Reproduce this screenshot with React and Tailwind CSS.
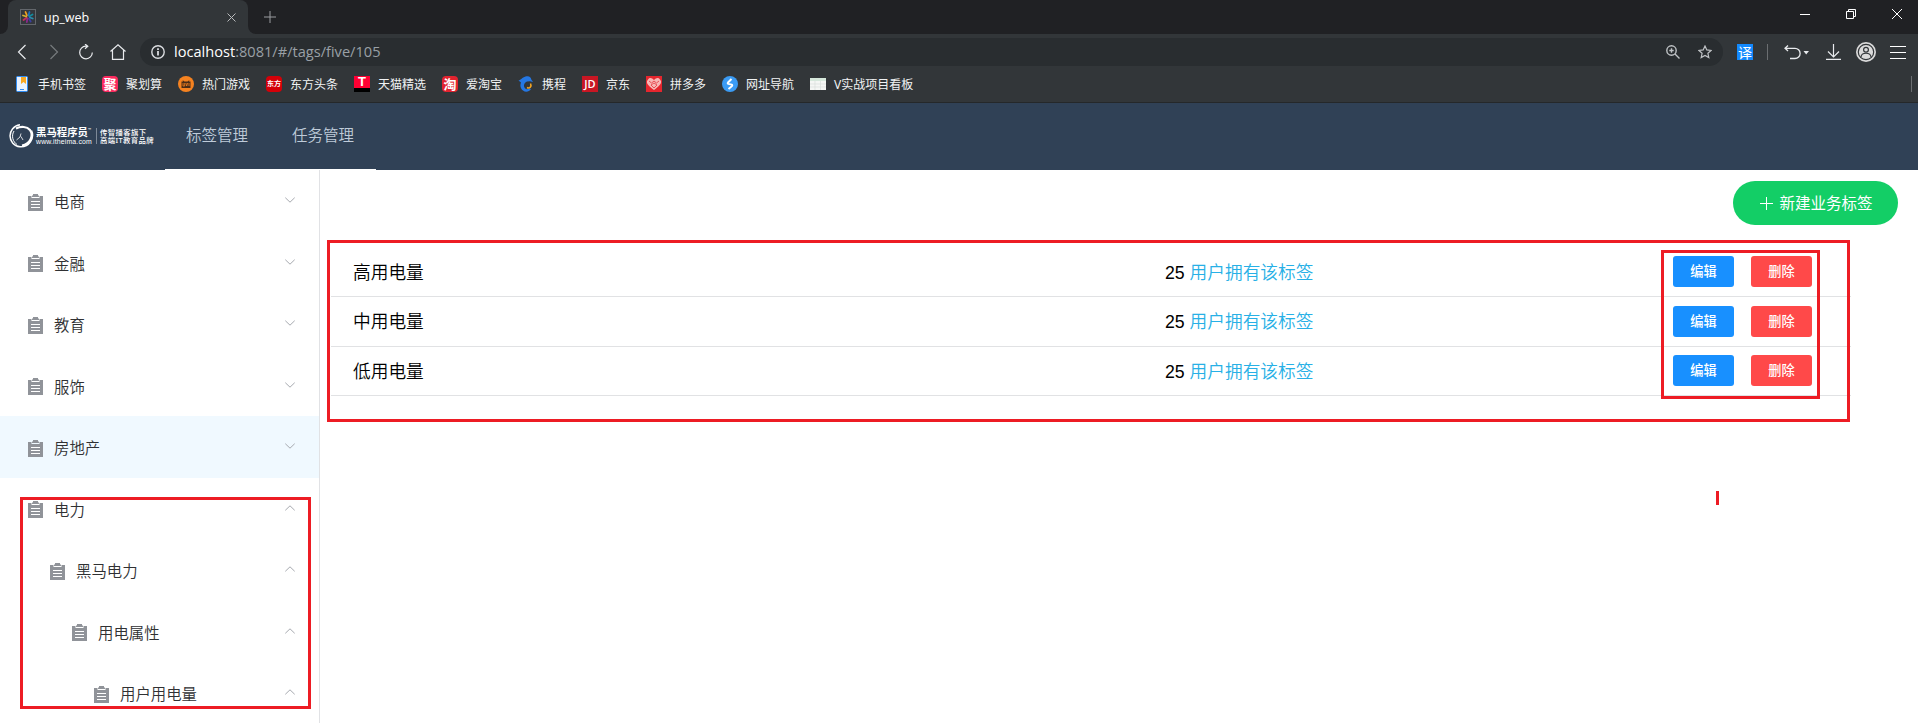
const CJK = "font-['Noto_Sans','Noto_Sans_CJK_SC',sans-serif]";

function Favicon() {
  return (
    <svg className="h-4 w-4" viewBox="0 0 16 16" fill="none">
      <rect x=".5" y=".5" width="15" height="15" fill="#34373c" stroke="#63676c" />
      <g strokeWidth="1.800" strokeLinecap="round">
        <path d="M7 6.500 5.500 3" stroke="#f0a020" />
        <path d="M8.500 6.500l1-3.500" stroke="#1d6fc0" />
        <path d="M9.500 7.300l3-1.800" stroke="#128a9c" />
        <path d="M9.800 8.500l3 1" stroke="#2a8fb0" />
        <path d="M9 9.500l1.700 3" stroke="#3a3fa0" />
        <path d="M7.500 9.500l-.7 3.500" stroke="#8a2a8c" />
        <path d="M6.500 8.800 3.500 11" stroke="#c0305c" />
        <path d="M6.200 7.500 3 6.500" stroke="#d8b030" />
      </g>
    </svg>
  );
}

function TitleBar() {
  return (
    <div className="flex h-[34px] shrink-0 bg-[#202124]">
      <div className="flex w-2 items-end bg-[#323639]">
        <div className="h-full w-2 rounded-br-lg bg-[#202124]" />
      </div>
      <div className="bg-[#202124]">
        <div className="flex h-[34px] w-60 items-center rounded-t-lg bg-[#323639] pl-3 pr-3">
          <Favicon />
          <span className="ml-2 flex-1 pt-0.5 font-['Open_Sans',sans-serif] text-[12.500px] font-medium leading-4 text-white">up_web</span>
          <svg className="h-[9px] w-[9px]" viewBox="0 0 9 9" stroke="#b9bbbd" fill="none"><path d="M.5.5l8 8M8.500.5l-8 8" /></svg>
        </div>
      </div>
      <div className="flex w-2 bg-[#323639]">
        <div className="h-full w-2 rounded-bl-lg bg-[#202124]" />
      </div>
      <svg className="ml-2 mt-[11px] h-3 w-3" viewBox="0 0 12 12" stroke="#9a9da0" fill="none"><path d="M6 0v12M0 6h12" /></svg>
      <div className="ml-auto flex items-start gap-9 pr-4 pt-[9px]">
        <svg className="h-[10px] w-[10px]" viewBox="0 0 10 10" stroke="#fff"><path d="M0 5.500h10" /></svg>
        <svg className="h-[10px] w-[10px]" viewBox="0 0 10 10" stroke="#fff" fill="none"><path d="M.5 2.500h7v7h-7zM2.500 2.500v-2h7v7h-2" /></svg>
        <svg className="h-[10px] w-[10px]" viewBox="0 0 10 10" stroke="#fff"><path d="M0 0l10 10M10 0L0 10" /></svg>
      </div>
    </div>
  );
}

function Toolbar() {
  return (
    <div className="flex h-9 shrink-0 items-center">
      <svg className="ml-[17px] h-4 w-[10px]" viewBox="0 0 10 16" stroke="#e8eaed" strokeWidth="1.200" fill="none"><path d="M8.500 1 1.500 8l7 7" /></svg>
      <svg className="ml-[22px] h-4 w-[10px]" viewBox="0 0 10 16" stroke="#777b7e" strokeWidth="1.200" fill="none"><path d="M1.500 1l7 7-7 7" /></svg>
      <svg className="ml-[19px] h-4 w-4" viewBox="0 0 16 16" stroke="#e8eaed" strokeWidth="1.200" fill="none"><path d="M9.500 2.200H7.800A6.300 6.300 0 1 0 14.300 8.500M7 0l2.800 2.200L7 4.700" /></svg>
      <svg className="ml-4 h-4 w-4" viewBox="0 0 16 16" stroke="#e8eaed" strokeWidth="1.200" fill="none"><path d="M.5 7.500 8 .8l7.500 6.700M2.500 6v9.400h11V6" /></svg>
      <div className="ml-[14px] flex h-7 w-[1583px] items-center rounded-full bg-[#292d30] pl-[11px] pr-[11px]">
        <svg className="h-[14px] w-[14px]" viewBox="0 0 14 14" fill="none" stroke="#dadce0" strokeWidth="1.400"><circle cx="7" cy="7" r="6.200" /><path d="M7 6v4.500M7 3.300v1.600" strokeWidth="1.800" /></svg>
        <span className="ml-[9px] pb-0.5 font-['Open_Sans',sans-serif] text-[14.600px] leading-5 text-white">localhost<span className="text-[#9aa0a6]">:8081/#/tags/five/105</span></span>
        <svg className="ml-auto h-[14px] w-[14px]" viewBox="0 0 14 14" fill="none" stroke="#c0c3c6" strokeWidth="1.400"><circle cx="5.500" cy="5.500" r="4.700" /><path d="M9 9l4.500 4.500M5.500 3.300v4.400M3.300 5.500h4.400" /></svg>
        <svg className="ml-[18px] h-[14px] w-[14px]" viewBox="0 0 14 14" fill="none" stroke="#c0c3c6" strokeWidth="1.200"><path d="M7 1l1.800 3.900 4.300.5-3.200 2.900.9 4.300L7 10.400l-3.800 2.200.9-4.300L.9 5.400l4.300-.5z" /></svg>
      </div>
      <div className="ml-[14px] flex h-4 w-4 items-center justify-center bg-[#1389fd] font-['Noto_Sans_CJK_SC',sans-serif] text-[14px] leading-4 text-white">译</div>
      <div className="ml-[14px] h-4 w-px bg-[#6b6e71]" />
      <svg className="ml-4 h-[15px] w-[25px]" viewBox="0 0 25 15" fill="none" stroke="#e8eaed" strokeWidth="1.300"><path d="M4 .5 1 3.300l3 2.800M1 3.300h10a5 5 0 0 1 0 10.200H6" /><path d="M19.500 6h5.500L22.200 9.500z" fill="#e8eaed" stroke="none" /></svg>
      <svg className="ml-[17px] h-4 w-[15px]" viewBox="0 0 15 16" fill="none" stroke="#e8eaed" strokeWidth="1.200"><path d="M7.500 0v13M2 7.500l5.500 5.500L13 7.500M0 15.400h15" /></svg>
      <svg className="ml-[15px] h-5 w-5" viewBox="0 0 20 20"><circle cx="10" cy="10" r="10" fill="#dadada" /><circle cx="10" cy="10" r="7.700" fill="none" stroke="#323639" strokeWidth="1.200" /><circle cx="10" cy="7.800" r="2.400" fill="none" stroke="#323639" strokeWidth="1.200" /><path d="M5 15c.5-5 9.500-5 10 0" fill="none" stroke="#323639" strokeWidth="1.200" /></svg>
      <div className="ml-[14px] flex w-4 flex-col gap-[5px]"><i className="h-px bg-white" /><i className="h-px bg-white" /><i className="h-px bg-white" /></div>
    </div>
  );
}

const svg = "h-4 w-4 shrink-0";
const BOOKMARKS = [
  ["手机书签", <svg className={svg} viewBox="0 0 16 16"><rect x="2.500" y=".5" width="11" height="15" rx="1" fill="#e9f2ff" stroke="#2f8df5" /><path d="M7 1h5v7L9.500 6 7 8z" fill="#f7a823" /><path d="M6 13.500h4" stroke="#2f8df5" /></svg>, "w-[88px]"],
  ["聚划算", <span className="flex h-4 w-4 items-center justify-center rounded-sm bg-[#fb2a5e] text-[13px] font-bold leading-4 text-white">聚</span>, "w-[76px]"],
  ["热门游戏", <svg className={svg} viewBox="0 0 16 16"><circle cx="8" cy="8" r="8" fill="#f58220" /><path d="M3.500 5.500h1.700L4.500 4l2 1.500h3l2-1.500-.7 1.500h1.700v6.500h-9z" fill="#4a2c17" /><path d="M5 7v3h1.700V7M7.800 7l.9 3 .9-3M11 7v3" stroke="#f58220" strokeWidth=".8" fill="none" /></svg>, "w-[88px]"],
  ["东方头条", <span className="flex h-4 w-4 items-center justify-center rounded-sm bg-[#d40008] text-[7px] font-bold leading-4 text-white">东方</span>, "w-[88px]"],
  ["天猫精选", <span className="flex h-4 w-4 items-center justify-center border-b-4 border-black bg-[#ff0033] font-['Liberation_Sans',sans-serif] text-[13px] font-bold leading-3 text-white">T</span>, "w-[88px]"],
  ["爱淘宝", <span className="flex h-4 w-4 items-center justify-center rounded-sm bg-[#e2232f] text-[13px] font-bold leading-4 text-white">淘</span>, "w-[76px]"],
  ["携程", <svg className={svg} viewBox="0 0 16 16"><path d="M.5 4.500C3 4 4 1.500 7.500.5 11-.5 13 1 13.300 3.500L15 6l-3-.8-3 .3C6 7 5 10 7 12.300c1 1.200 3 1.300 4.500.2L13 13c-2 3-5.500 3.500-8 1.500C2 12 2 9 3 6.500z" fill="#2577e3" /><path d="M9 11.500c2.500 1.500 5-1 3.500-4" fill="none" stroke="#f5a623" strokeWidth="1.600" /></svg>, "w-16"],
  ["京东", <span className="flex h-4 w-4 items-center justify-center bg-[#c81623] font-['Open_Sans',sans-serif] text-[11px] font-semibold leading-4 text-white">JD</span>, "w-16"],
  ["拼多多", <svg className={svg} viewBox="0 0 16 16"><path d="M0 0h16v16H0z" fill="#e5262e" /><path d="M8 14C0 8 0 6 2 3.500s4-1.500 6 .5c2-2 4-3 6-.5S16 8 8 14z" fill="#f7b7b5" /><path d="M3 5l2.500 2L8 5l2.500 2L13 5M5 9l3-2 3 2-3 3z" stroke="#e5363e" strokeWidth=".8" fill="none" /></svg>, "w-[76px]"],
  ["网址导航", <svg className={svg} viewBox="0 0 16 16"><circle cx="8" cy="8" r="8" fill="#3b9bf4" /><path d="M9.500 3 6 6.500q-.8 1 .3 1.400l3.400.8q1 .5.2 1.400L6.500 13" fill="none" stroke="#fff" strokeWidth="1.900" /></svg>, "w-[88px]"],
  ["V实战项目看板", <svg className={svg} viewBox="0 0 16 16"><path d="M0 2h16v12H0z" fill="#f4f6f4" /><path d="M0 2h16v3H0z" fill="#d6e8dc" /><path d="M0 8h16M0 11h16M5 5v9M10.500 5v9" stroke="#d9dedb" strokeWidth=".7" /></svg>, ""],
];

function Bookmarks() {
  return (
    <div className="flex h-8 shrink-0 pl-[14px] pr-[6px] pt-1.5">
      {BOOKMARKS.map(([label, icon, width]) => (
        <div key={label} className={"flex h-4 shrink-0 items-center gap-2 whitespace-nowrap text-xs leading-4 text-[#f1f3f4] " + width}>
          {icon}
          <span className="pt-0.5">{label}</span>
        </div>
      ))}
      <div className="ml-auto h-4 w-px bg-[#6b6e71]" />
    </div>
  );
}

function Logo() {
  return (
    <div className="flex w-[165px] items-center pb-0.5 pl-[9px] text-white">
      <svg className="h-6 w-[26px] shrink-0" viewBox="0 0 26 24" fill="none" stroke="#fff"><path d="M11 .8C-2.500 3-2 21 11 22.800 20 23.500 26 14 22.500 6.500" strokeWidth="1.500" /><path d="M7 4.500c5-2.500 11-2 14 1.500 4 6 0 14-8 15.500" strokeWidth="2.200" /><path d="M5 7C2 12 4 18 8 20.500" strokeWidth="1" /><path d="M7.500 16l3.500-3 1-3.500M12 12.500l2 3.500" strokeWidth=".8" /></svg>
      <div className="ml-px flex w-[60px] flex-col">
        <span className="flex whitespace-nowrap text-[10.400px] font-bold leading-[11px]">黑马程序员<span className="text-[4px] leading-[6px]">™</span></span>
        <span className="font-['Liberation_Sans',sans-serif] text-[6.900px] leading-[7px] tracking-[0.150px]">www.itheima.com</span>
      </div>
      <div className="h-4 w-px bg-[#7d8998]" />
      <div className="ml-[3px] whitespace-nowrap text-[7.400px] font-medium leading-2 tracking-[0.350px]"><div>传智播客旗下</div><div>高端IT教育品牌</div></div>
    </div>
  );
}

const MENU = [
  ["电商", "pl-7"],
  ["金融", "pl-7"],
  ["教育", "pl-7"],
  ["服饰", "pl-7"],
  ["房地产", "bg-[#f0f9ff] pl-7"],
  ["电力", "pl-7", true],
  ["黑马电力", "pl-[50px]", true],
  ["用电属性", "pl-[72px]", true],
  ["用户用电量", "pl-[94px]", true],
];

function MenuRow({ label, style, open }) {
  return (
    <div className={"flex h-[61.500px] shrink-0 items-center pr-6 " + style}>
      <svg className="mt-[3px] h-[17px] w-[15px]" viewBox="0 0 15 17"><path d="M0 2h3.500v2h8V2H15v15H0zM5 0h5v1.500h1V3H4V1.500h1z" fill="#909399" /><path d="M3 7.500h9M3 10.500h9M3 13.500h9" stroke="#fff" /></svg>
      <span className="ml-[11px] mt-[5px] flex-1 text-[15.400px] font-[350] leading-5 text-[#303133]">{label}</span>
      <svg className="mb-px h-1.5 w-[10px]" viewBox="0 0 10 6" fill="none" stroke="#a6a9af">{open ? <path d="M.3 5.300 5 .8l4.700 4.500" /> : <path d="M.3.7 5 5.200 9.700.7" />}</svg>
    </div>
  );
}

function TagRow({ name, height, pad, textPad }) {
  return (
    <div className={"flex items-start border-b border-[#e1e2e4] " + height + " " + pad}>
      <span className={"w-[834px] pl-[22px] text-[17.700px] font-[350] leading-7 text-black " + textPad}>{name}</span>
      <span className={"w-[508px] text-[17.700px] font-[350] leading-7 text-[#27b0e6] " + textPad}><span className="font-['Liberation_Sans',sans-serif] font-normal text-black">25 </span>用户拥有该标签</span>
      <button className="h-[31px] w-[61px] rounded-[3px] bg-[#1890ff] pb-px text-[13.200px] font-medium leading-[30px] text-white">编辑</button>
      <button className="ml-[17px] h-[31px] w-[61px] rounded-[3px] bg-[#ff4949] pb-px text-[13.200px] font-medium leading-[30px] text-white">删除</button>
    </div>
  );
}

export default function App() {
  return (
    <div className={"relative flex h-[723px] w-[1918px] flex-col overflow-hidden bg-white " + CJK}>
      <div className="flex h-[103px] shrink-0 flex-col border-b border-[#25282a] bg-[#323639]">
        <TitleBar />
        <Toolbar />
        <Bookmarks />
      </div>
      <header className="flex h-[67px] shrink-0 bg-[#304156]">
        <Logo />
        <nav className="flex w-[211px] border-b border-white text-[15.500px] font-[350] leading-[65px] text-[#bfcbd9]">
          <span className="w-[106px] pl-[21px]">标签管理</span>
          <span className="pl-[21px]">任务管理</span>
        </nav>
      </header>
      <div className="flex min-h-0 flex-1">
        <aside className="flex w-80 shrink-0 flex-col overflow-hidden border-r border-[#e1e2e5]">
          {MENU.map(([label, style, open]) => <MenuRow key={label} label={label} style={style} open={open} />)}
        </aside>
        <main className="flex flex-1 flex-col">
          <div className="flex h-[77px] justify-end pr-5 pt-[11px]">
            <button className="flex h-11 w-[165px] items-center justify-center gap-[6px] rounded-full bg-[#13ce66] pl-0.5 pt-px text-[15.500px] text-white">
              <svg className="h-[13px] w-[13px]" viewBox="0 0 13 13" stroke="#fff"><path d="M6.500 0v13M0 6.500h13" /></svg>
              <span>新建业务标签</span>
            </button>
          </div>
          <div className="ml-[11px] w-[1520px]">
            <TagRow name="高用电量" height="h-[50px]" pad="pt-[9px]" textPad="pt-0.5" />
            <TagRow name="中用电量" height="h-[50px]" pad="pt-[9px]" textPad="pt-px" />
            <TagRow name="低用电量" height="h-[49px]" pad="pt-2" textPad="pt-0.5" />
          </div>
        </main>
      </div>
      <div className="absolute left-[327px] top-[240px] h-[182px] w-[1523px] border-[3px] border-[#ed1c24]" />
      <div className="absolute left-[1661px] top-[250px] h-[149px] w-[159px] border-[3px] border-[#ed1c24]" />
      <div className="absolute left-5 top-[497px] h-[212px] w-[291px] border-[3px] border-[#ed1c24]" />
      <div className="absolute left-[1716px] top-[491px] h-[14px] w-[3px] bg-[#ed1c24]" />
    </div>
  );
}
